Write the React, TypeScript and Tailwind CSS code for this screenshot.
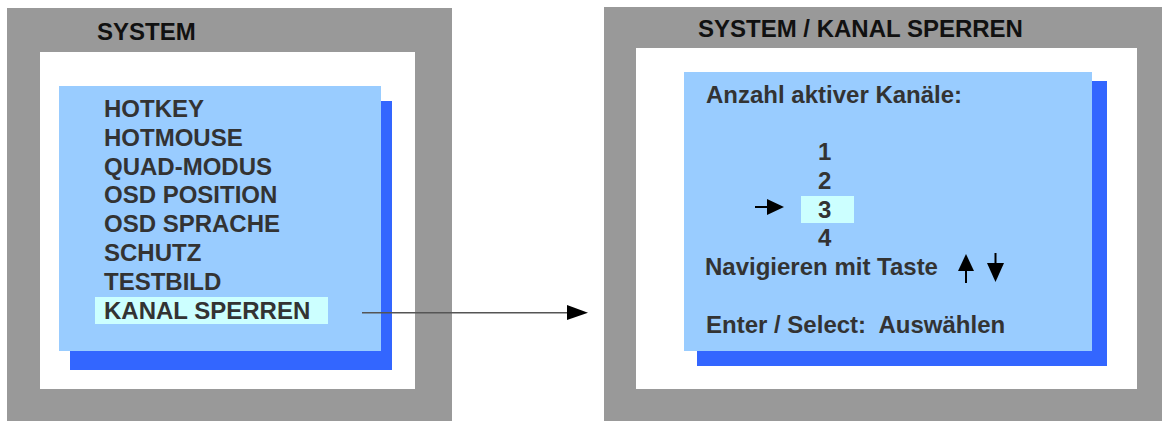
import type { ReactNode } from "react";

const MENU = [
  "HOTKEY",
  "HOTMOUSE",
  "QUAD-MODUS",
  "OSD POSITION",
  "OSD SPRACHE",
  "SCHUTZ",
  "TESTBILD",
];

function RightArrow() {
  return (
    <svg width="29" height="16" viewBox="0 0 29 16" className="mt-[3px]">
      <line x1="0" y1="8" x2="14" y2="8" stroke="#000" strokeWidth="2" />
      <polygon points="12,0 29,8 12,16" fill="#000" />
    </svg>
  );
}

function UpArrow() {
  return (
    <svg width="16" height="30" viewBox="0 0 16 30">
      <line x1="8" y1="12" x2="8" y2="30" stroke="#000" strokeWidth="2" />
      <polygon points="0,18 8,1 16,18" fill="#000" />
    </svg>
  );
}

function DownArrow() {
  return (
    <svg width="17" height="30" viewBox="0 0 17 30">
      <line x1="8.5" y1="0" x2="8.5" y2="16" stroke="#000" strokeWidth="2" />
      <polygon points="0,10 8.5,29 17,10" fill="#000" />
    </svg>
  );
}

function Line({ children }: { children?: ReactNode }) {
  return <div className="h-[28.8px] whitespace-pre">{children}</div>;
}

function ChannelRow({ n, active }: { n: number; active?: boolean }) {
  return (
    <div className="flex items-start h-[28.8px]">
      <div className="w-[49px]" />
      <div className="w-[46px]">{active && <RightArrow />}</div>
      <div
        className={`w-[53px] h-[27px] pl-[17px] ${active ? "bg-[#ccffff]" : ""}`}
      >
        {n}
      </div>
    </div>
  );
}

export default function App() {
  return (
    <div className="relative flex w-[1162px] h-[421px] bg-white font-['Liberation_Sans',Arial,sans-serif] font-bold text-[24px] leading-[28.8px]">
      {/* Hauptmenü */}
      <section className="ml-[7px] mt-[8px] w-[445px] h-[413px] bg-[#999999] flex flex-col">
        <h1 className="h-[44px] pt-[10px] pl-[90px] text-[24px] font-bold text-[#111]">
          SYSTEM
        </h1>
        <div className="ml-[33px] w-[375px] h-[337px] bg-white pt-[34px] pl-[19px]">
          <div className="w-[322px] h-[265px] bg-[#99ccff] shadow-[11px_15px_0_#3366ff,11px_19px_0_#3366ff] pt-[9px] pl-[45px] text-[#333]">
            {MENU.map((item) => (
              <Line key={item}>{item}</Line>
            ))}
            <div className="h-[28.8px]">
              <span className="block -ml-[9px] pl-[9px] w-[233px] h-[27px] bg-[#ccffff]">
                KANAL SPERREN
              </span>
            </div>
          </div>
        </div>
      </section>

      {/* Untermenü Kanal sperren */}
      <section className="ml-[152px] mt-[7px] w-[558px] h-[414px] bg-[#999999] flex flex-col">
        <h1 className="h-[41px] pt-[7.5px] pl-[94px] text-[24px] font-bold text-[#111]">
          SYSTEM / KANAL SPERREN
        </h1>
        <div className="ml-[32px] w-[501px] h-[341px] bg-white pt-[24px] pl-[48px]">
          <div className="w-[408px] h-[279px] bg-[#99ccff] shadow-[13px_9px_0_#3366ff,15px_9px_0_#3366ff,13px_15px_0_#3366ff,15px_15px_0_#3366ff] pt-[8.5px] pl-[22px] text-[#333]">
            <Line>Anzahl aktiver Kanäle:</Line>
            <Line />
            <ChannelRow n={1} />
            <ChannelRow n={2} />
            <ChannelRow n={3} active />
            <ChannelRow n={4} />
            <div className="flex items-start h-[28.8px]">
              <span className="-ml-[1px]">Navigieren mit Taste</span>
              <span className="ml-[20px]">
                <UpArrow />
              </span>
              <span className="ml-[13px]">
                <DownArrow />
              </span>
            </div>
            <Line />
            <Line>{"Enter / Select:  Auswählen"}</Line>
          </div>
        </div>
      </section>

      {/* Verbindungspfeil */}
      <svg
        className="absolute left-[360px] top-[304px]"
        width="230"
        height="18"
        viewBox="0 0 230 18"
      >
        <line x1="2" y1="8.7" x2="212" y2="8.7" stroke="#555" strokeWidth="1.5" />
        <polygon points="207,1 228,8.7 207,16" fill="#000" />
      </svg>
    </div>
  );
}
